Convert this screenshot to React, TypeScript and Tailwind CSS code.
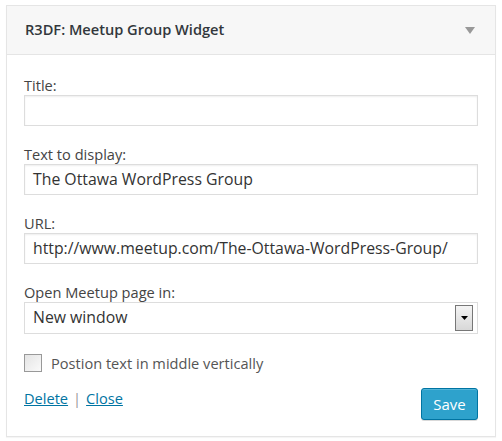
import React from 'react';

const font = { fontFamily: '"Open Sans", sans-serif' };

const Field = ({ label, value }: { label: string; value?: string }) => (
    <div className="flex flex-col">
        <label className="text-[14.6px] leading-[20px] text-[#444]">{label}</label>
        <div className="h-[31px] border border-[#ddd] shadow-[inset_0_1px_2px_rgba(0,0,0,0.07)] bg-white px-[8px] flex items-center text-[15.8px] text-[#333]">
            {value}
        </div>
    </div>
);

export default function App() {
    return (
        <div className="w-[502px] h-[441px] bg-white pt-[5px] px-[6px]" style={font}>
            <div className="w-[490px] border border-[#e5e5e5] bg-white shadow-[0_1px_1px_rgba(0,0,0,0.04)]">
                <div className="h-[49px] bg-[#f7f7f7] border-b border-[#e5e5e5] flex items-center justify-between pl-[18px] pr-[20px]">
                    <span className="text-[14.6px] font-semibold text-[#32373c]">R3DF: Meetup Group Widget</span>
                    <svg width="10" height="8" viewBox="0 0 10 8">
                        <path d="M0 1 L10 1 L5 8 Z" fill="#999" />
                    </svg>
                </div>
                <div className="px-[17px] pt-[20px] pb-[16px] flex flex-col">
                    <div className="flex flex-col gap-[18px]">
                        <Field label="Title:" />
                        <Field label="Text to display:" value="The Ottawa WordPress Group" />
                        <Field label="URL:" value="http://www.meetup.com/The-Ottawa-WordPress-Group/" />
                        <div className="flex flex-col">
                            <label className="text-[14.6px] leading-[20px] text-[#444]">Open Meetup page in:</label>
                            <div className="h-[32px] border border-[#ddd] bg-white pl-[8px] pr-[4px] flex items-center justify-between text-[15.8px] text-[#333]">
                                <span>New window</span>
                                <div className="w-[18px] h-[26px] border border-[#777] bg-gradient-to-b from-[#f4f4f4] to-[#d8d8d8] flex items-center justify-center">
                                    <svg width="7" height="4" viewBox="0 0 7 4">
                                        <path d="M0 0 L7 0 L3.5 4 Z" fill="#000" />
                                    </svg>
                                </div>
                            </div>
                        </div>
                    </div>
                    <div className="mt-[20px] flex items-center gap-[9px]">
                        <div className="w-[18px] h-[18px] border border-[#999] bg-gradient-to-br from-[#e4e4e4] to-[#fafafa]" />
                        <span className="text-[14.6px] leading-[18px] text-[#555]">Postion text in middle vertically</span>
                    </div>
                    <div className="mt-[16px] flex items-start justify-between">
                        <div className="text-[14.6px] leading-[20px] text-[#555]">
                            <a className="text-[#0074a2] underline">Delete</a>
                            <span className="mx-[5px] text-[#999]">|</span>
                            <a className="text-[#0074a2] underline">Close</a>
                        </div>
                        <button className="h-[32px] w-[57px] rounded-[3px] bg-[#2ea2cc] border border-[#0074a2] text-white text-[15px] shadow-[inset_0_1px_0_rgba(120,200,230,0.5),0_1px_0_rgba(0,0,0,0.15)]">
                            Save
                        </button>
                    </div>
                </div>
            </div>
        </div>
    );
}
